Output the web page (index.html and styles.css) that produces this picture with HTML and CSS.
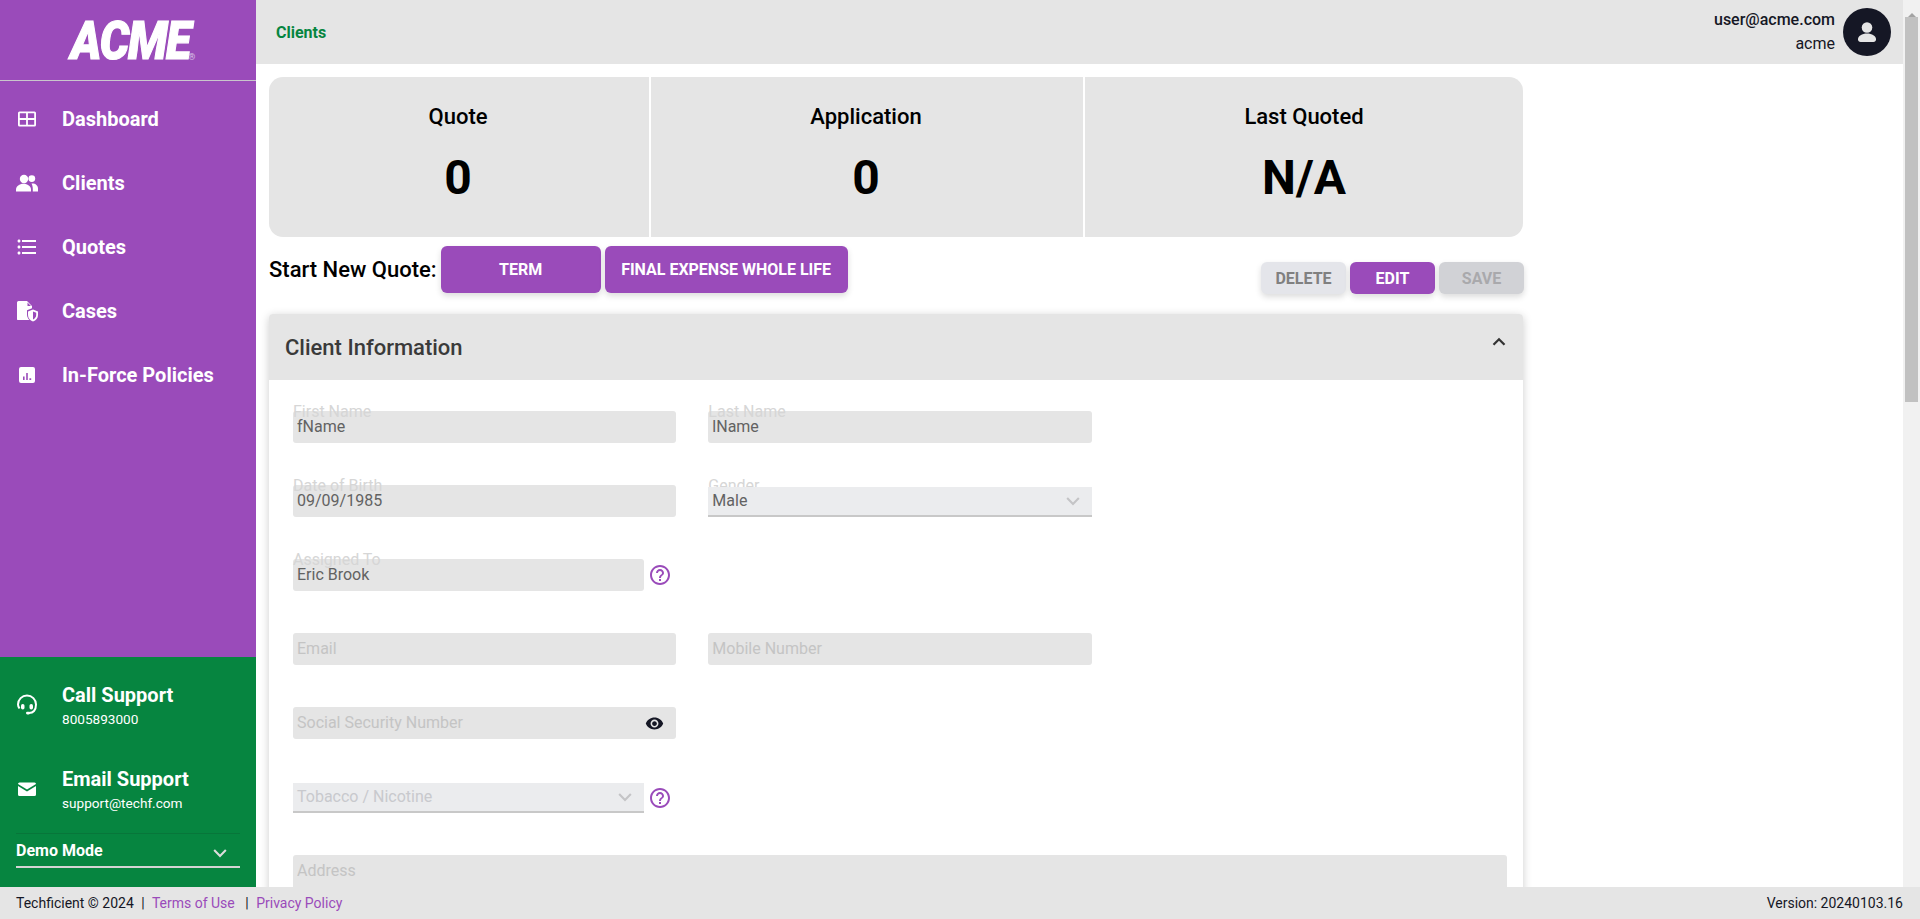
FILE: index.html
```html
<!DOCTYPE html>
<html lang="en">
<head>
    <meta charset="utf-8">
    <meta name="viewport" content="width=device-width, initial-scale=1.0">
    <title>Clients</title>
    <link rel="stylesheet" href="styles.css">
</head>
<body>
    <div class="shell">
        <aside class="sidebar">
            <div class="logo"><span class="logo-text">ACME</span><span class="logo-mark">®</span></div>
            <nav class="nav">
                <a class="nav-item">
                    <svg class="nav-icon" viewBox="0 0 24 24"><path d="M4.5 4.5h15a1.500 1.500 0 0 1 1.500 1.500v12a1.500 1.500 0 0 1-1.500 1.500h-15a1.500 1.500 0 0 1-1.500-1.500v-12a1.500 1.500 0 0 1 1.500-1.500zm.3 1.800v4.800h6.300v-4.800zm8.100 0v4.800h6.300v-4.800zm-8.100 6.600v4.800h6.300v-4.800zm8.100 0v4.800h6.300v-4.800z" fill-rule="evenodd"/></svg>
                    <span>Dashboard</span>
                </a>
                <a class="nav-item">
                    <svg class="nav-icon" viewBox="0 0 24 24"><circle cx="9" cy="8" r="4.200"/><circle cx="16.800" cy="7.600" r="3.400"/><path d="M1 20.500v-2c0-3.300 3.500-5.800 7.500-5.800s7.500 2.500 7.500 5.800v2z"/><path d="M16.500 12.500c3.700-.4 6.500 1.800 6.500 5v3h-5.200v-2.500c0-2.200-.5-4-1.300-5.500z"/></svg>
                    <span>Clients</span>
                </a>
                <a class="nav-item">
                    <svg class="nav-icon" viewBox="0 0 24 24"><path d="M4 10.500c-.83 0-1.500.67-1.500 1.500s.67 1.500 1.500 1.500 1.500-.67 1.500-1.500-.67-1.500-1.500-1.500zm0-6c-.83 0-1.500.67-1.500 1.500S3.170 7.500 4 7.500 5.500 6.830 5.500 6 4.830 4.500 4 4.500zm0 12c-.83 0-1.500.68-1.500 1.500s.68 1.500 1.500 1.500 1.500-.68 1.500-1.500-.67-1.500-1.500-1.500zM7 19h14v-2H7v2zm0-6h14v-2H7v2zm0-8v2h14V5H7z"/></svg>
                    <span>Quotes</span>
                </a>
                <a class="nav-item">
                    <svg class="nav-icon" viewBox="0 0 24 24"><path d="M3.500 2H12l5 5v2.300l-5 2v4.200c0 2.300 1 4.200 2.500 5.500h-11A1.500 1.500 0 0 1 2 20.500v-17A1.500 1.500 0 0 1 3.500 2zM12.500 3.500V7H16z"/><path d="M18 10.500l5 2v3.600c0 3-2 5.400-5 6.400-3-1-5-3.400-5-6.400v-3.600zm0 2v8c1.900-.8 3.200-2.500 3.200-4.400v-2.400z" fill-rule="evenodd"/></svg>
                    <span>Cases</span>
                </a>
                <a class="nav-item">
                    <svg class="nav-icon" viewBox="0 0 24 24"><path d="M6 4h12a2 2 0 0 1 2 2v12a2 2 0 0 1-2 2H6a2 2 0 0 1-2-2V6a2 2 0 0 1 2-2zm2 9.500v3.500h1.600v-3.500zm3.200-3.500v7h1.600v-7zm3.200 5.200v1.800h1.800v-1.800z" fill-rule="evenodd"/></svg>
                    <span>In-Force Policies</span>
                </a>
            </nav>
            <div class="support">
                <div class="support-item">
                    <svg class="nav-icon" viewBox="0 0 24 24"><path class="line" d="M4.500 15.500C3.500 14 3 12.800 3 11.500a9 9 0 0 1 18 0c0 3-.8 5.200-2 6.500-1 1.200-2.800 2-5 2"/><rect x="6" y="11" width="3.500" height="5.500" rx="1.700"/><rect x="14.500" y="11" width="3.500" height="5.500" rx="1.700"/><rect x="11" y="18.800" width="4" height="2.600" rx="1.300"/></svg>
                    <div>
                        <div class="support-title">Call Support</div>
                        <div class="support-sub">8005893000</div>
                    </div>
                </div>
                <div class="support-item">
                    <svg class="nav-icon" viewBox="0 0 24 24"><path d="M4.500 5.500h15A1.500 1.500 0 0 1 21 7L12 12.500 3 7a1.500 1.500 0 0 1 1.500-1.500z"/><path d="M3 9l9 5.500L21 9v8.500a1.500 1.500 0 0 1-1.500 1.500h-15A1.500 1.500 0 0 1 3 17.500z"/></svg>
                    <div>
                        <div class="support-title">Email Support</div>
                        <div class="support-sub">support@techf.com</div>
                    </div>
                </div>
                <div class="demo">
                    <span>Demo Mode</span>
                    <svg class="chevron" viewBox="0 0 24 24"><path d="M5 8.500l7 7 7-7"/></svg>
                </div>
            </div>
        </aside>

        <div class="page">
            <header class="topbar">
                <a class="crumb">Clients</a>
                <div class="user">
                    <div class="user-text">
                        <div class="user-mail">user@acme.com</div>
                        <div class="user-org">acme</div>
                    </div>
                    <div class="avatar">
                        <svg viewBox="0 0 24 24"><circle cx="12" cy="7.500" r="5.300"/><path d="M3 19c0-3 4-5.500 9-5.500s9 2.500 9 5.500v.5c0 1.400-1.100 2.500-2.500 2.500h-13C4.100 22 3 20.900 3 19.500z"/></svg>
                    </div>
                </div>
            </header>

            <main class="content">
                <section class="stats">
                    <div class="stat stat-quote">
                        <div class="stat-title">Quote</div>
                        <div class="stat-value">0</div>
                    </div>
                    <div class="stat stat-app">
                        <div class="stat-title">Application</div>
                        <div class="stat-value">0</div>
                    </div>
                    <div class="stat stat-last">
                        <div class="stat-title">Last Quoted</div>
                        <div class="stat-value">N/A</div>
                    </div>
                </section>

                <section class="actions">
                    <div class="new-quote">
                        <span class="new-quote-label">Start New Quote:</span>
                        <button class="btn btn-term">TERM</button>
                        <button class="btn btn-final">FINAL EXPENSE WHOLE LIFE</button>
                    </div>
                    <div class="edit-actions">
                        <button class="btn btn-small btn-delete">DELETE</button>
                        <button class="btn btn-small">EDIT</button>
                        <button class="btn btn-small btn-save">SAVE</button>
                    </div>
                </section>

                <section class="panel">
                    <div class="panel-head">
                        <h2>Client Information</h2>
                        <svg class="panel-toggle" viewBox="0 0 24 24"><path d="M6 15l6-6 6 6"/></svg>
                    </div>
                    <div class="form">
                        <div class="field">
                            <label>First Name</label>
                            <input type="text" value="fName" disabled>
                        </div>
                        <div class="field">
                            <label>Last Name</label>
                            <input type="text" value="lName" disabled>
                        </div>
                        <div class="field"></div>

                        <div class="field">
                            <label>Date of Birth</label>
                            <input type="text" value="09/09/1985" disabled>
                        </div>
                        <div class="field">
                            <label class="label-select">Gender</label>
                            <div class="select">
                                <span>Male</span>
                                <svg class="chevron" viewBox="0 0 24 24"><path d="M5 8.500l7 7 7-7"/></svg>
                            </div>
                        </div>
                        <div class="field"></div>

                        <div class="field field-help">
                            <label>Assigned To</label>
                            <input type="text" value="Eric Brook" disabled>
                            <svg class="help" viewBox="0 0 24 24"><path d="M11 18h2v-2h-2v2zm1-16C6.480 2 2 6.480 2 12s4.480 10 10 10 10-4.480 10-10S17.520 2 12 2zm0 18c-4.410 0-8-3.590-8-8s3.590-8 8-8 8 3.590 8 8-3.590 8-8 8zm0-14c-2.210 0-4 1.790-4 4h2c0-1.100.9-2 2-2s2 .9 2 2c0 2-3 1.750-3 5h2c0-2.250 3-2.500 3-5 0-2.210-1.790-4-4-4z"/></svg>
                        </div>
                        <div class="field"></div>
                        <div class="field"></div>

                        <div class="field"><input type="text" placeholder="Email" disabled></div>
                        <div class="field"><input type="text" placeholder="Mobile Number" disabled></div>
                        <div class="field"></div>

                        <div class="field">
                            <div class="input-eye">
                                <input type="text" placeholder="Social Security Number" disabled>
                                <svg class="eye" viewBox="0 0 24 24"><path d="M12 4.500C7 4.500 2.730 7.610 1 12c1.730 4.390 6 7.500 11 7.500s9.270-3.110 11-7.500c-1.730-4.390-6-7.500-11-7.500zM12 17c-2.760 0-5-2.240-5-5s2.240-5 5-5 5 2.240 5 5-2.240 5-5 5zm0-8c-1.660 0-3 1.340-3 3s1.340 3 3 3 3-1.340 3-3-1.340-3-3-3z"/></svg>
                            </div>
                        </div>
                        <div class="field"></div>
                        <div class="field"></div>

                        <div class="field field-help">
                            <div class="select select-empty">
                                <span>Tobacco / Nicotine</span>
                                <svg class="chevron" viewBox="0 0 24 24"><path d="M5 8.500l7 7 7-7"/></svg>
                            </div>
                            <svg class="help" viewBox="0 0 24 24"><path d="M11 18h2v-2h-2v2zm1-16C6.480 2 2 6.480 2 12s4.480 10 10 10 10-4.480 10-10S17.520 2 12 2zm0 18c-4.410 0-8-3.590-8-8s3.590-8 8-8 8 3.590 8 8-3.590 8-8 8zm0-14c-2.210 0-4 1.790-4 4h2c0-1.100.9-2 2-2s2 .9 2 2c0 2-3 1.750-3 5h2c0-2.250 3-2.500 3-5 0-2.210-1.790-4-4-4z"/></svg>
                        </div>
                        <div class="field"></div>
                        <div class="field"></div>

                        <div class="field field-wide"><input type="text" placeholder="Address" disabled></div>
                    </div>
                </section>
            </main>
        </div>

        <div class="scrollbar">
            <div class="scroll-up"></div>
            <div class="scroll-thumb"></div>
        </div>
    </div>

    <footer class="footer">
        <div>
            Techficient © 2024 <span class="sep">|</span> <a>Terms of Use</a> <span class="sep sep-wide">|</span> <a>Privacy Policy</a>
        </div>
        <div>Version: 20240103.16</div>
    </footer>
</body>
</html>
```

FILE: styles.css
```css
* {
    box-sizing: border-box;
}

html,
body {
    height: 100%;
}

body {
    margin: 0;
    display: flex;
    flex-direction: column;
    overflow: hidden;
    font-family: Roboto, 'Liberation Sans', sans-serif;
    font-size: 16px;
    color: #151725;
    background: #ffffff;
}

.shell {
    flex: 1;
    display: flex;
    min-height: 0;
}

/* sidebar */
.sidebar {
    width: 256px;
    flex-shrink: 0;
    display: flex;
    flex-direction: column;
    background: #9a4bba;
    color: #ffffff;
}

.logo {
    height: 81px;
    display: flex;
    justify-content: center;
    align-items: flex-start;
    padding-top: 12px;
    border-bottom: 1px solid #c9c5cc;
}

.logo-text {
    font-size: 54px;
    line-height: 58px;
    font-weight: 900;
    font-style: italic;
    letter-spacing: -1.5px;
    -webkit-text-stroke: 1.2px #ffffff;
    transform: scaleX(0.86);
}

.logo-mark {
    font-size: 9px;
    margin-top: 40px;
    margin-left: -11px;
    color: #d9c4e4;
}

.nav {
    flex: 1;
    padding-top: 6px;
}

.nav-item {
    height: 64px;
    display: flex;
    align-items: center;
    padding-left: 15px;
    font-size: 20px;
    font-weight: 700;
}

.nav-icon {
    width: 24px;
    height: 24px;
    flex-shrink: 0;
    margin-right: 23px;
    fill: #ffffff;
}

.nav-icon .line {
    fill: none;
    stroke: #ffffff;
    stroke-width: 2;
}

.support {
    height: 230px;
    background: #068540;
    padding-top: 8px;
}

.support-item {
    height: 84px;
    display: flex;
    align-items: center;
    padding-left: 15px;
}

.support-item .nav-icon {
    margin-top: -4px;
}

.support-title {
    font-size: 20px;
    font-weight: 700;
    line-height: 24px;
}

.support-sub {
    font-size: 13.6px;
    line-height: 24px;
}

.demo {
    margin: 0 16px;
    padding: 8px 10px 0 0;
    height: 35px;
    display: flex;
    justify-content: space-between;
    border-top: 1px solid #07763a;
    border-bottom: 2px solid #d4d4d4;
    font-size: 16px;
    font-weight: 700;
    line-height: 18px;
}

.chevron {
    width: 20px;
    height: 20px;
    fill: none;
    stroke: #c4c4c6;
    stroke-width: 2.5;
}

.demo .chevron {
    margin-top: 1px;
    stroke: #dddddd;
}

/* top bar */
.page {
    flex: 1;
    min-width: 0;
    overflow: hidden;
}

.topbar {
    height: 64px;
    display: flex;
    justify-content: space-between;
    align-items: center;
    padding: 0 12px 0 20px;
    background: #e5e5e5;
}

.crumb {
    font-size: 16px;
    font-weight: 700;
    color: #068540;
}

.user {
    display: flex;
    align-items: center;
    gap: 8px;
}

.user-text {
    text-align: right;
    font-size: 16px;
    line-height: 24px;
}

.user-mail {
    font-weight: 500;
}

.avatar {
    width: 48px;
    height: 48px;
    display: flex;
    align-items: center;
    justify-content: center;
    border-radius: 50%;
    background: #151725;
}

.avatar svg {
    width: 24px;
    height: 24px;
    fill: #e5e5e5;
}

/* main */
.content {
    width: 1268px;
    padding: 13px 0 0 13px;
}

.stats {
    display: flex;
    gap: 2px;
    color: #000000;
}

.stat {
    height: 160px;
    background: #e5e5e5;
    text-align: center;
    padding-top: 26px;
}

.stat-quote {
    width: 380px;
    padding-right: 2px;
    border-radius: 14px 0 0 14px;
}

.stat-app {
    width: 432px;
    padding-right: 2px;
}

.stat-last {
    width: 438px;
    border-radius: 0 14px 14px 0;
}

.stat-title {
    font-size: 22px;
    font-weight: 500;
    line-height: 28px;
}

.stat-value {
    margin-top: 19px;
    font-size: 48px;
    font-weight: 700;
    line-height: 56px;
}

.actions {
    display: flex;
    justify-content: space-between;
    align-items: flex-end;
    margin-top: 9px;
}

.new-quote {
    display: flex;
    align-items: center;
    gap: 4px;
}

.new-quote-label {
    font-size: 22px;
    font-weight: 500;
    color: #000000;
}

.btn {
    border: none;
    border-radius: 6px;
    background: #9a4bba;
    color: #ffffff;
    font-family: inherit;
    font-size: 16px;
    font-weight: 700;
    box-shadow: 0 3px 6px rgba(0, 0, 0, 0.14);
}

.btn-term {
    width: 160px;
    height: 47px;
}

.btn-final {
    width: 243px;
    height: 47px;
}

.edit-actions {
    display: flex;
    gap: 4px;
    margin-bottom: -1px;
}

.btn-small {
    width: 85px;
    height: 32px;
}

.btn-delete {
    background: #e4e5ea;
    color: #808080;
}

.btn-save {
    background: #d1d2d6;
    color: #a9a9ac;
}

.panel {
    margin-top: 21px;
    width: 1254px;
    background: #ffffff;
    border-radius: 4px 4px 0 0;
    box-shadow: 0 2px 10px rgba(0, 0, 0, 0.2);
}

.panel-head {
    height: 66px;
    display: flex;
    justify-content: space-between;
    align-items: center;
    padding: 0 13px 0 16px;
    background: #e5e5e5;
    border-radius: 4px 4px 0 0;
}

.panel-head h2 {
    margin: 0;
    font-size: 22px;
    font-weight: 500;
    color: #3a3a3a;
}

.panel-toggle {
    width: 22px;
    height: 22px;
    margin-bottom: 10px;
    fill: none;
    stroke: #333333;
    stroke-width: 2.5;
}

.form {
    display: grid;
    grid-template-columns: repeat(3, 1fr);
    gap: 42px 32px;
    padding: 31px 16px 40px 24px;
}

.field {
    position: relative;
    height: 32px;
    display: flex;
    align-items: flex-end;
}

.field-wide {
    grid-column: 1 / -1;
    height: 64px;
}

.field label {
    position: absolute;
    left: 0;
    top: -8px;
    font-size: 16px;
    line-height: 18px;
    color: #d6d6d6;
    z-index: 1;
    pointer-events: none;
}

.field label.label-select {
    z-index: 0;
}

.field input {
    width: 100%;
    height: 100%;
    border: none;
    border-radius: 3px;
    padding: 0 4px 2px;
    background: #e5e5e5;
    color: #626262;
    font-family: inherit;
    font-size: 16px;
    opacity: 1;
}

.field input::placeholder {
    color: #c4c4c4;
    opacity: 1;
}

.field-wide input {
    padding-bottom: 34px;
}

.input-eye {
    position: relative;
    width: 100%;
    height: 100%;
}

.eye {
    position: absolute;
    right: 12px;
    top: 7px;
    width: 19px;
    height: 19px;
    fill: #151725;
}

.field-help input,
.field-help .select {
    width: 351px;
    flex-shrink: 0;
}

.help {
    width: 24px;
    height: 24px;
    margin: 0 0 4px 4px;
    flex-shrink: 0;
    fill: #9a4bba;
}

.select + .help {
    margin-bottom: 3px;
}

.select {
    position: relative;
    z-index: 1;
    width: 100%;
    height: 30px;
    display: flex;
    justify-content: space-between;
    align-items: center;
    padding: 0 9px 1px 4px;
    background: #ebecee;
    border-bottom: 2px solid #c8c8c8;
    color: #626262;
}

.select-empty {
    color: #c8c9cd;
}

/* fake scrollbar, the page itself doesn't scroll */
.scrollbar {
    width: 17px;
    flex-shrink: 0;
    background: #f1f1f1;
    padding: 0 2px;
}

.scroll-up {
    width: 0;
    height: 17px;
    margin: 0 auto;
    border-left: 4px solid transparent;
    border-right: 4px solid transparent;
    border-bottom: 4px solid #a3a3a3;
    border-top: 6px solid transparent;
}

.scroll-thumb {
    height: 385px;
    background: #c1c1c1;
}

/* footer */
.footer {
    height: 32px;
    flex-shrink: 0;
    display: flex;
    justify-content: space-between;
    align-items: center;
    padding: 0 17px 0 16px;
    position: relative;
    background: #e5e5e5;
    font-size: 14px;
}

.footer a {
    color: #9a4bba;
}

.sep {
    margin: 0 4px;
    color: #151725;
}

.sep-wide {
    margin: 0 4px 0 7px;
}
```
